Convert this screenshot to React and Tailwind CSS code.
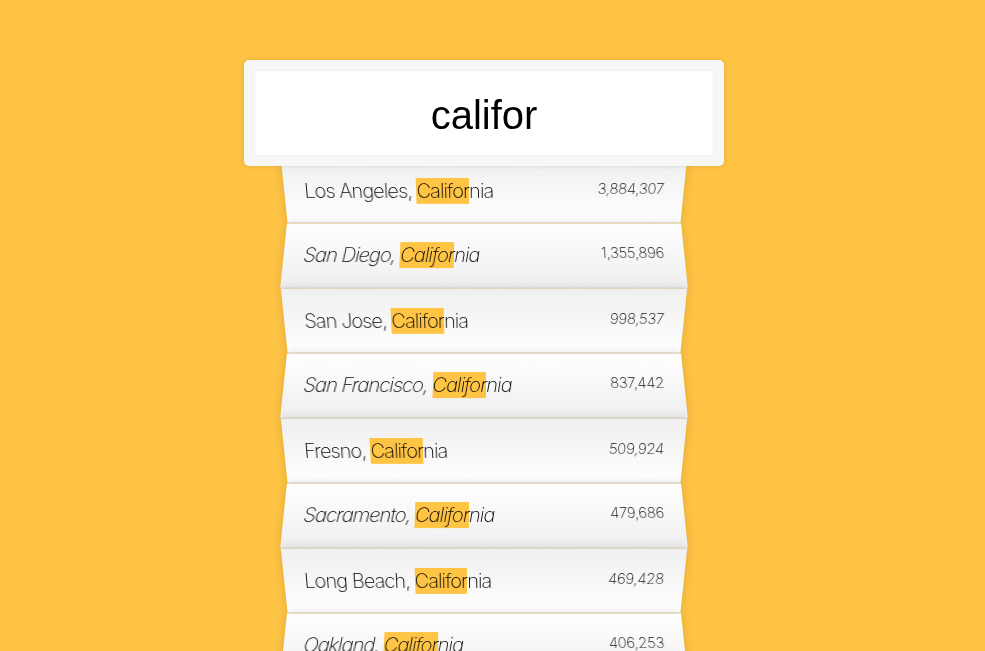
const cities = [
  { city: "Los Angeles", pop: "3,884,307" },
  { city: "San Diego", pop: "1,355,896" },
  { city: "San Jose", pop: "998,537" },
  { city: "San Francisco", pop: "837,442" },
  { city: "Fresno", pop: "509,924" },
  { city: "Sacramento", pop: "479,686" },
  { city: "Long Beach", pop: "469,428" },
  { city: "Oakland", pop: "406,253" },
  { city: "Bakersfield", pop: "363,630" },
];

function Suggestion({ item, index }) {
  const even = index % 2 === 1;
  return (
    <li
      className={`flex justify-between p-5 border-b border-[#D8D8D8] shadow-[0_0_10px_rgba(0,0,0,0.14)] ${
        even
          ? "bg-gradient-to-b from-white to-[#EFEFEF] [transform:perspective(100px)_rotateX(3deg)_translateY(2px)_scale(1.001)]"
          : "bg-gradient-to-t from-white to-[#EFEFEF] [transform:perspective(100px)_rotateX(-3deg)_translateY(3px)]"
      }`}
    >
      <span className={`text-[20px] leading-6 tracking-[-0.9px] text-black ${even ? "italic" : ""}`}>
        {item.city}, <span className="bg-[#ffc444] py-px">Califor</span>nia
      </span>
      <span className="text-[15px] leading-5 tracking-[-0.3px] text-[#111]">{item.pop}</span>
    </li>
  );
}

export default function App() {
  return (
    <div className="h-[651px] overflow-hidden bg-[#ffc444] font-['Inter','Liberation_Sans',sans-serif] font-[250]">
      <form className="w-[400px] ml-[284px] mt-[50px]">
        <input
          readOnly
          value="califor"
          className="relative z-10 top-[10px] -left-10 w-[480px] pt-[22px] pb-[18px] px-5 m-0 text-center outline-none border-[10px] border-[#F7F7F7] rounded-[5px] bg-white text-[40px] leading-[46px] font-normal text-black font-['Liberation_Sans',sans-serif] shadow-[0_0_5px_rgba(0,0,0,0.12),inset_0_0_2px_rgba(0,0,0,0.19)]"
        />
        <ul className="relative m-0 p-0 list-none">
          {cities.map((c, i) => (
            <Suggestion key={c.city} item={c} index={i} />
          ))}
        </ul>
      </form>
    </div>
  );
}
